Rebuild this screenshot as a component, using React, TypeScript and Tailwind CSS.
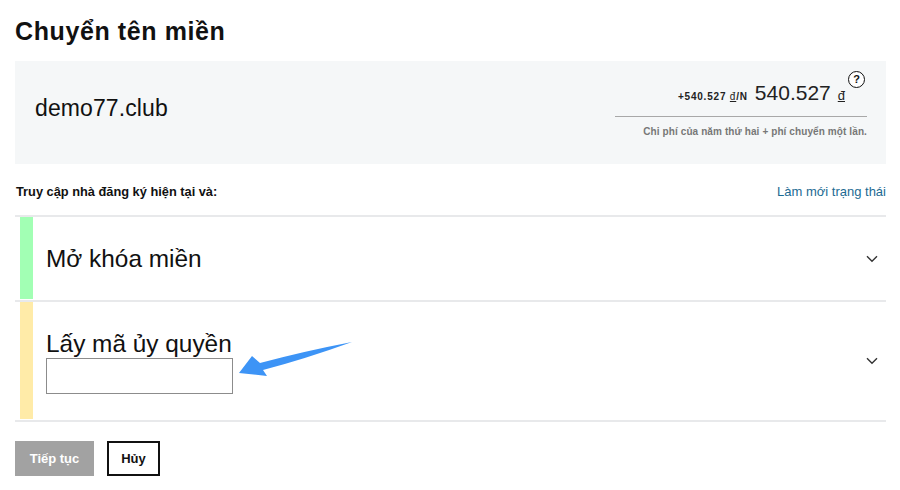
const FONT = "font-['Liberation_Sans',Arial,sans-serif]";

function Chevron() {
  return (
    <svg width="12" height="8" viewBox="0 0 12 8" fill="none" stroke="#333" strokeWidth="1.4">
      <path d="M1 1.2 L6 6.2 L11 1.2" />
    </svg>
  );
}

export default function App() {
  return (
    <div className={`${FONT} w-[900px] h-[490px] bg-white text-[#111] overflow-hidden pl-[15px] pr-[14px] relative`}>
      <h1 className="h-[61px] pt-[15px] text-[25px] leading-[32px] font-bold tracking-[0.6px]">Chuyển tên miền</h1>

      <div className="h-[103px] bg-[#f5f7f8] flex justify-between pl-[20px] pr-[19px]">
        <div className="text-[23px] leading-[26px] pt-[34px] tracking-[0.1px]">demo77.club</div>
        <div className="w-[252px] pt-[9px]">
          <div className="h-[47px] border-b border-[#a8a8a8] flex justify-end items-start pr-[2px]">
            <div className="flex items-baseline pt-[10px]">
              <span className="text-[10px] font-bold tracking-[0.8px] text-[#222]">
                +540.527 <span className="underline font-normal">đ</span>/N
              </span>
              <span className="text-[21px] leading-[26px] ml-[7px] text-[#222]">540.527</span>
              <span className="text-[13px] underline ml-[7px] text-[#222]">đ</span>
            </div>
            <div className="ml-[3px] mt-[1px] w-[17px] h-[17px] rounded-full border-[1.5px] border-[#111] bg-white flex items-center justify-center text-[11px] font-bold leading-none">
              ?
            </div>
          </div>
          <div className="text-[10px] font-bold text-[#777] text-right pt-[9px] leading-[12px] tracking-[0.1px]">
            Chi phí của năm thứ hai + phí chuyển một lần.
          </div>
        </div>
      </div>

      <div className="h-[51px] flex items-center justify-between pt-[6px] pb-[1px]">
        <span className="text-[12.8px] font-bold pl-[1px]">Truy cập nhà đăng ký hiện tại và:</span>
        <a className="text-[13px] text-[#1b6a93]">Làm mới trạng thái</a>
      </div>

      <div className="border-t-2 border-[#e8e9eb] h-[85px] flex items-stretch">
        <div className="w-[13px] ml-[5px] mb-[1px] bg-[#a2ffb4]" />
        <div className="flex-1 flex items-center justify-between pl-[13px] pr-[8px]">
          <div className="text-[24.4px] leading-[28px]">Mở khóa miền</div>
          <Chevron />
        </div>
      </div>

      <div className="border-t-2 border-[#e8e9eb] h-[120px] flex items-stretch">
        <div className="w-[13px] ml-[5px] mb-[1px] bg-[#ffeba8]" />
        <div className="flex-1 flex items-center justify-between pl-[13px] pr-[8px]">
          <div className="pt-[1px]">
            <div className="text-[24.4px] leading-[28px]">Lấy mã ủy quyền</div>
            <input className="block w-[187px] h-[36px] border border-[#8c8c8c] bg-white" />
          </div>
          <Chevron />
        </div>
      </div>

      <div className="border-t-2 border-[#e8e9eb] flex gap-[13px] pt-[19px]">
        <button className="w-[79px] h-[35px] bg-[#a2a2a2] text-white text-[13px] font-bold">Tiếp tục</button>
        <button className="w-[53px] h-[35px] border-2 border-[#111] bg-white text-[13px] font-bold">Hủy</button>
      </div>

      <svg className="absolute left-[235px] top-[335px]" width="120" height="45" viewBox="0 0 120 45">
        <path d="M4 38 L17 21 L25 28 Q70 16 117 7 Q70 24 28 35 L32 41 Z" fill="#3d94f6" />
      </svg>
    </div>
  );
}
